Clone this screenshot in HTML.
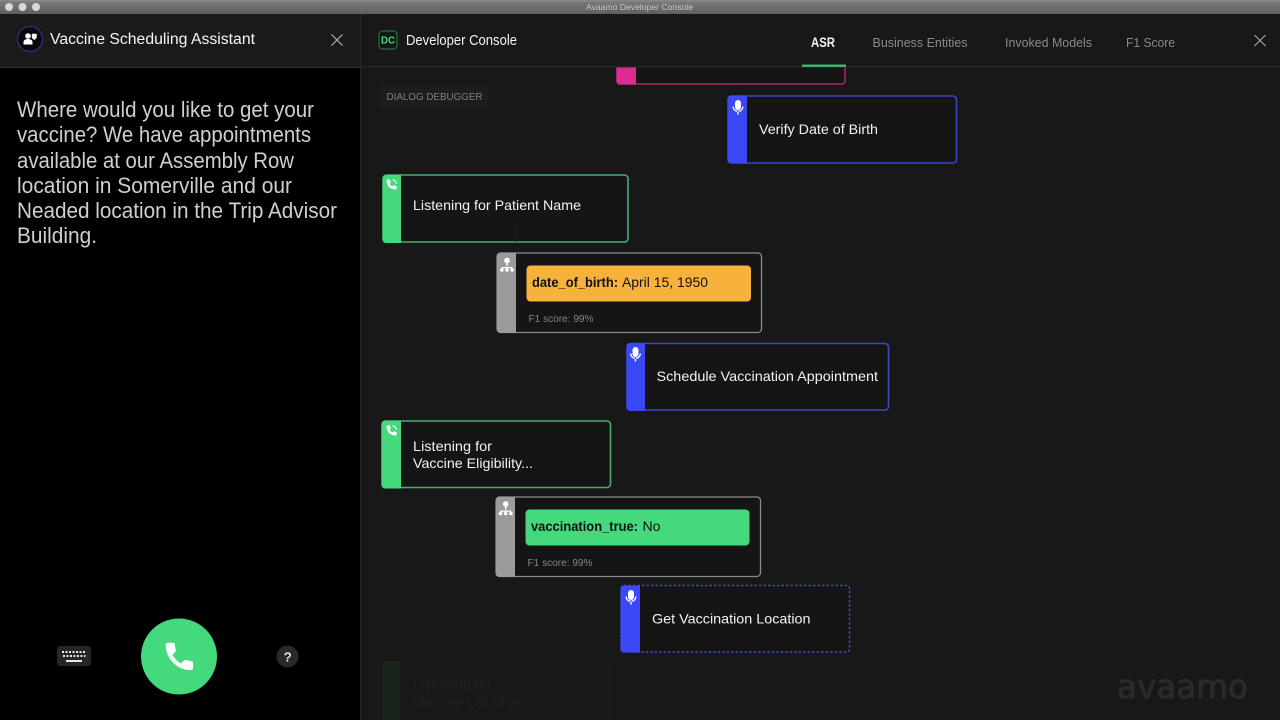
<!DOCTYPE html>
<html>
<head>
<meta charset="utf-8">
<style>
html,body{margin:0;padding:0;width:1280px;height:720px;overflow:hidden;background:#181818}
svg{display:block;position:absolute;left:0;top:0}
text{font-family:"Liberation Sans",sans-serif;fill:#f2f2f2}
</style>
</head>
<body>
<svg width="1280" height="720" viewBox="0 0 1280 720" xmlns="http://www.w3.org/2000/svg">
<defs>
<linearGradient id="tb" x1="0" y1="0" x2="0" y2="1"><stop offset="0" stop-color="#8c8c8c"/><stop offset="0.2" stop-color="#777"/><stop offset="1" stop-color="#5f5f5f"/></linearGradient>
</defs>
<rect width="1280" height="720" fill="#181818"/>
<!-- Title bar -->
<rect width="1280" height="14" fill="url(#tb)"/>
<circle cx="9" cy="7" r="4" fill="#d8d8d8"/><circle cx="22.500" cy="7" r="4" fill="#d8d8d8"/><circle cx="36" cy="7" r="4" fill="#d8d8d8"/>
<text x="586" y="10" font-size="8.500" textLength="107" lengthAdjust="spacingAndGlyphs" style="fill:#c8c8c8">Avaamo Developer Console</text>

<!-- Left panel -->
<rect x="0" y="14" width="360" height="53" fill="#1a1a1a"/>
<rect x="0" y="67" width="360" height="653" fill="#000"/>
<rect x="0" y="66.500" width="360" height="1.500" fill="#2b2b2b"/>
<rect x="360" y="14" width="1" height="706" fill="#262626"/>
<circle cx="30" cy="39" r="12.500" fill="#08080f" stroke="#33307e" stroke-width="1.300"/>
<circle cx="28" cy="36" r="2.800" fill="#fff"/>
<path d="M23.500 44.500v-2.500c0-1.800 2-3 4.500-3s4.500 1.200 4.500 3v2.500z" fill="#fff"/>
<path d="M31.500 33.500h5.500v4.500l-2.750 2.500-2.750-2.500z" fill="#fff" stroke="#08080f" stroke-width=".6"/>
<text x="50" y="44" font-size="15.500" textLength="205" lengthAdjust="spacingAndGlyphs" style="fill:#f5f5f5">Vaccine Scheduling Assistant</text>
<path d="M331.500 34.500l11 11M342.500 34.500l-11 11" stroke="#b5b5b5" stroke-width="1.200" fill="none"/>

<g>
<text x="17" y="117" font-size="22" textLength="297" lengthAdjust="spacingAndGlyphs" style="fill:#cfcfcf">Where would you like to get your</text>
<text x="17" y="142" font-size="22" textLength="294" lengthAdjust="spacingAndGlyphs" style="fill:#cfcfcf">vaccine? We have appointments</text>
<text x="17" y="168" font-size="22" textLength="277" lengthAdjust="spacingAndGlyphs" style="fill:#cfcfcf">available at our Assembly Row</text>
<text x="17" y="193" font-size="22" textLength="275" lengthAdjust="spacingAndGlyphs" style="fill:#cfcfcf">location in Somerville and our</text>
<text x="17" y="218" font-size="22" textLength="320" lengthAdjust="spacingAndGlyphs" style="fill:#cfcfcf">Neaded location in the Trip Advisor</text>
<text x="17" y="243" font-size="22" textLength="80" lengthAdjust="spacingAndGlyphs" style="fill:#cfcfcf">Building.</text>
</g>

<!-- Bottom controls -->
<rect x="57" y="646" width="34" height="20" rx="3.500" fill="#262626"/>
<g fill="#e8e8e8">
<rect x="62" y="651" width="2" height="2"/><rect x="65.500" y="651" width="2" height="2"/><rect x="69" y="651" width="2" height="2"/><rect x="72.500" y="651" width="2" height="2"/><rect x="76" y="651" width="2" height="2"/><rect x="79.500" y="651" width="2" height="2"/><rect x="83" y="651" width="2" height="2"/>
<rect x="63" y="655" width="2" height="2"/><rect x="66.500" y="655" width="2" height="2"/><rect x="70" y="655" width="2" height="2"/><rect x="73.500" y="655" width="2" height="2"/><rect x="77" y="655" width="2" height="2"/><rect x="80.500" y="655" width="2" height="2"/><rect x="84" y="655" width="1.500" height="2"/>
<rect x="66" y="660" width="16" height="2"/>
</g>
<circle cx="179" cy="656.500" r="38" fill="#43d97c"/>
<path transform="translate(162 639) scale(1.450)" d="M6.620 10.790c1.440 2.830 3.760 5.140 6.590 6.590l2.200-2.200c.27-.27.67-.36 1.020-.24 1.120.37 2.330.57 3.570.57.55 0 1 .45 1 1V20c0 .55-.45 1-1 1-9.390 0-17-7.610-17-17 0-.55.45-1 1-1h3.500c.55 0 1 .45 1 1 0 1.250.2 2.450.57 3.570.11.35.03.74-.25 1.020l-2.200 2.200z" fill="#fff" stroke="#fff" stroke-width="0.900" stroke-linejoin="round"/>
<circle cx="287.500" cy="656.500" r="11" fill="#2a2a2a"/>
<text x="284" y="661.500" font-size="13" style="fill:#f0f0f0;stroke:#f0f0f0;stroke-width:.35">?</text>

<!-- Right header -->
<rect x="361" y="14" width="919" height="53" fill="#181818"/>
<rect x="361" y="66" width="919" height="1.500" fill="#262626"/>
<rect x="379" y="31" width="18" height="18" rx="3.500" fill="#0d1a12" stroke="#2f7a4a" stroke-width="1"/>
<text x="381" y="43.500" font-size="10" font-weight="bold" textLength="14" lengthAdjust="spacingAndGlyphs" style="fill:#43d97c">DC</text>
<text x="406" y="45" font-size="14.500" textLength="111" lengthAdjust="spacingAndGlyphs" style="fill:#f2f2f2">Developer Console</text>
<text x="811" y="47" font-size="13.500" font-weight="bold" textLength="24" lengthAdjust="spacingAndGlyphs" style="fill:#f5f5f5">ASR</text>
<text x="872.500" y="47" font-size="13" textLength="95" lengthAdjust="spacingAndGlyphs" style="fill:#8a8a8a">Business Entities</text>
<text x="1005" y="47" font-size="13" textLength="87" lengthAdjust="spacingAndGlyphs" style="fill:#8a8a8a">Invoked Models</text>
<text x="1126" y="47" font-size="13" textLength="49" lengthAdjust="spacingAndGlyphs" style="fill:#8a8a8a">F1 Score</text>
<path d="M1254.500 35l11 11M1265.500 35l-11 11" stroke="#a8a8a8" stroke-width="1.100" fill="none"/>
<rect x="802" y="64.500" width="44" height="2.500" fill="#3fb56c"/>

<!-- Dialog debugger -->
<rect x="379" y="86" width="109" height="21" rx="2" fill="#1e1c1c"/>
<text x="386.500" y="100" font-size="10.500" textLength="96" lengthAdjust="spacingAndGlyphs" style="fill:#7f7f7f">DIALOG DEBUGGER</text>

<!-- Pink partial node -->
<path d="M617 67.500v13.500a3 3 0 0 0 3 3h222a3 3 0 0 0 3-3V67.500" fill="#151515" stroke="#a8286f" stroke-width="1.500"/>
<path d="M616.500 67.500h19.500v17h-16a3.500 3.500 0 0 1-3.500-3.500z" fill="#e02a92"/>

<!-- Verify Date of Birth -->
<rect x="728" y="96" width="228.500" height="67" rx="3.500" fill="#151515" stroke="#3d46c4" stroke-width="1.600"/>
<path d="M727.500 99a3.500 3.500 0 0 1 3.500-3.500h16v68h-16a3.500 3.500 0 0 1-3.500-3.500z" fill="#3a48f5"/>
<g fill="#fff"><rect x="735" y="100" width="6" height="10" rx="3"/><path d="M732.500 106.500a5.500 5.500 0 0 0 11 0h-1.300a4.200 4.200 0 0 1-8.400 0zM737.300 111h1.400v3.500h-1.400z"/></g>
<text x="759" y="134" font-size="14" textLength="119" lengthAdjust="spacingAndGlyphs">Verify Date of Birth</text>

<!-- Listening for Patient Name -->
<rect x="383" y="175" width="245" height="67" rx="3.500" fill="#151515" stroke="#45ad6c" stroke-width="1.600"/>
<path d="M382.500 178.500a3.500 3.500 0 0 1 3.500-3.500h15v68h-15a3.500 3.500 0 0 1-3.500-3.500z" fill="#43d97c"/>
<g transform="translate(386 179)"><path d="M1 .7l2-.5c.4-.1.6.1.8.4l1 2.300c.1.3 0 .6-.2.800l-1 .9c.6 1.300 1.600 2.300 2.900 2.900l.9-1c.2-.2.500-.3.800-.2l2.300 1c.3.200.5.400.4.800l-.5 2c-.1.300-.3.500-.6.500C4.300 10.600.5 6.800.5 1.300c0-.3.200-.5.500-.6z" fill="#fff"/><path d="M6.500.8a4.500 4.500 0 0 1 4 4" stroke="#fff" stroke-width="1" fill="none"/></g>
<text x="413" y="210" font-size="14" textLength="168" lengthAdjust="spacingAndGlyphs">Listening for Patient Name</text>

<!-- connector -->
<rect x="515" y="224" width="1" height="18" fill="#1e1e1e"/>

<!-- date_of_birth -->
<rect x="497" y="253" width="264.500" height="79.500" rx="3.500" fill="#151515" stroke="#8a8a8a" stroke-width="1.300"/>
<path d="M497 256a3.500 3.500 0 0 1 3.500-3.500H516v80.500h-15.500a3.500 3.500 0 0 1-3.500-3.500z" fill="#9b9b9b"/>
<g fill="#fff"><circle cx="507" cy="260.500" r="2.800"/><rect x="506.300" y="262" width="1.400" height="4"/><path d="M501.500 270v-3h11v3h-1.200v-1.800h-3.700V270h-1.200v-1.800h-3.700V270z"/><circle cx="501.800" cy="270" r="1.800"/><circle cx="507" cy="270" r="1.800"/><circle cx="512.200" cy="270" r="1.800"/></g>
<rect x="526.500" y="265.500" width="224.500" height="36" rx="4" fill="#f7b23c"/>
<text x="532" y="287" font-size="14" font-weight="bold" textLength="86" lengthAdjust="spacingAndGlyphs" style="fill:#111">date_of_birth:</text>
<text x="622" y="287" font-size="14" textLength="86" lengthAdjust="spacingAndGlyphs" style="fill:#111">April 15, 1950</text>
<text x="528.500" y="322" font-size="10.500" textLength="65" lengthAdjust="spacingAndGlyphs" style="fill:#858585">F1 score: 99%</text>

<!-- Schedule Vaccination Appointment -->
<rect x="627" y="343.500" width="261.500" height="66.500" rx="3.500" fill="#151515" stroke="#3d46c4" stroke-width="1.600"/>
<path d="M626.500 346.500a3.500 3.500 0 0 1 3.500-3.500h15v68h-15a3.500 3.500 0 0 1-3.500-3.500z" fill="#3a48f5"/>
<g fill="#fff"><rect x="632.500" y="347" width="6" height="10" rx="3"/><path d="M630 353.500a5.500 5.500 0 0 0 11 0h-1.300a4.200 4.200 0 0 1-8.400 0zM634.800 358h1.400v3.500h-1.400z"/></g>
<text x="656.500" y="381" font-size="14" textLength="221.500" lengthAdjust="spacingAndGlyphs">Schedule Vaccination Appointment</text>

<!-- Listening for Vaccine Eligibility -->
<rect x="382" y="421" width="228.500" height="66.500" rx="3.500" fill="#151515" stroke="#45ad6c" stroke-width="1.600"/>
<path d="M381.500 424a3.500 3.500 0 0 1 3.500-3.500h16v68h-16a3.500 3.500 0 0 1-3.500-3.500z" fill="#43d97c"/>
<g transform="translate(386 425)"><path d="M1 .7l2-.5c.4-.1.6.1.8.4l1 2.300c.1.3 0 .6-.2.800l-1 .9c.6 1.300 1.600 2.300 2.900 2.900l.9-1c.2-.2.500-.3.800-.2l2.300 1c.3.200.5.400.4.800l-.5 2c-.1.300-.3.500-.6.500C4.300 10.600.5 6.800.5 1.300c0-.3.200-.5.500-.6z" fill="#fff"/><path d="M6.500.8a4.500 4.500 0 0 1 4 4" stroke="#fff" stroke-width="1" fill="none"/></g>
<text x="413" y="451" font-size="14" textLength="79" lengthAdjust="spacingAndGlyphs">Listening for</text>
<text x="413" y="468" font-size="14" textLength="120" lengthAdjust="spacingAndGlyphs">Vaccine Eligibility...</text>

<!-- vaccination_true -->
<rect x="496" y="497" width="264.500" height="79.500" rx="3.500" fill="#151515" stroke="#8a8a8a" stroke-width="1.300"/>
<path d="M496 500a3.500 3.500 0 0 1 3.500-3.500H515v80.500h-15.500a3.500 3.500 0 0 1-3.500-3.500z" fill="#9b9b9b"/>
<g fill="#fff"><circle cx="505.700" cy="504" r="2.800"/><rect x="505" y="505.500" width="1.400" height="4"/><path d="M500.200 513.500v-3h11v3H510v-1.800h-3.700v1.800h-1.200v-1.800h-3.700v1.800z"/><circle cx="500.500" cy="513.500" r="1.800"/><circle cx="505.700" cy="513.500" r="1.800"/><circle cx="510.900" cy="513.500" r="1.800"/></g>
<rect x="525.500" y="509.500" width="224" height="36" rx="4" fill="#43d97c"/>
<text x="531" y="531" font-size="14" font-weight="bold" textLength="107" lengthAdjust="spacingAndGlyphs" style="fill:#111">vaccination_true:</text>
<text x="642.500" y="531" font-size="14" textLength="18" lengthAdjust="spacingAndGlyphs" style="fill:#111">No</text>
<text x="527.500" y="566" font-size="10.500" textLength="65" lengthAdjust="spacingAndGlyphs" style="fill:#858585">F1 score: 99%</text>

<!-- Get Vaccination Location -->
<rect x="621" y="585.500" width="228.500" height="66.500" rx="3" fill="#151515" stroke="#4049d0" stroke-width="1.500" stroke-dasharray="2.500 2"/>
<path d="M620.500 588.500a3 3 0 0 1 3-3H640v67h-16.500a3 3 0 0 1-3-3z" fill="#3a48f5"/>
<g fill="#fff"><rect x="628" y="590" width="6" height="10" rx="3"/><path d="M625.500 596.500a5.500 5.500 0 0 0 11 0h-1.300a4.200 4.200 0 0 1-8.400 0zM630.300 601h1.400v3.500h-1.400z"/></g>
<text x="652" y="623.500" font-size="14" textLength="158.500" lengthAdjust="spacingAndGlyphs">Get Vaccination Location</text>

<!-- Fading node -->
<rect x="382" y="661" width="18" height="59" fill="#1a231c"/>
<rect x="400" y="659" width="210" height="1" fill="#1b1b1b"/>
<rect x="609" y="662" width="1" height="58" fill="#1b1b1b"/>
<text x="413" y="689" font-size="14" textLength="79" lengthAdjust="spacingAndGlyphs" style="fill:#202020">Listening for</text>
<text x="413" y="707" font-size="14" textLength="108" lengthAdjust="spacingAndGlyphs" style="fill:#202020">Vaccine Location</text>

<!-- avaamo watermark -->
<text x="1117" y="698" textLength="131" lengthAdjust="spacingAndGlyphs" style="font-family:'DejaVu Sans',sans-serif;font-size:33px;fill:#2a2a2a;stroke:#2a2a2a;stroke-width:1">avaamo</text>
</svg>
</body>
</html>
